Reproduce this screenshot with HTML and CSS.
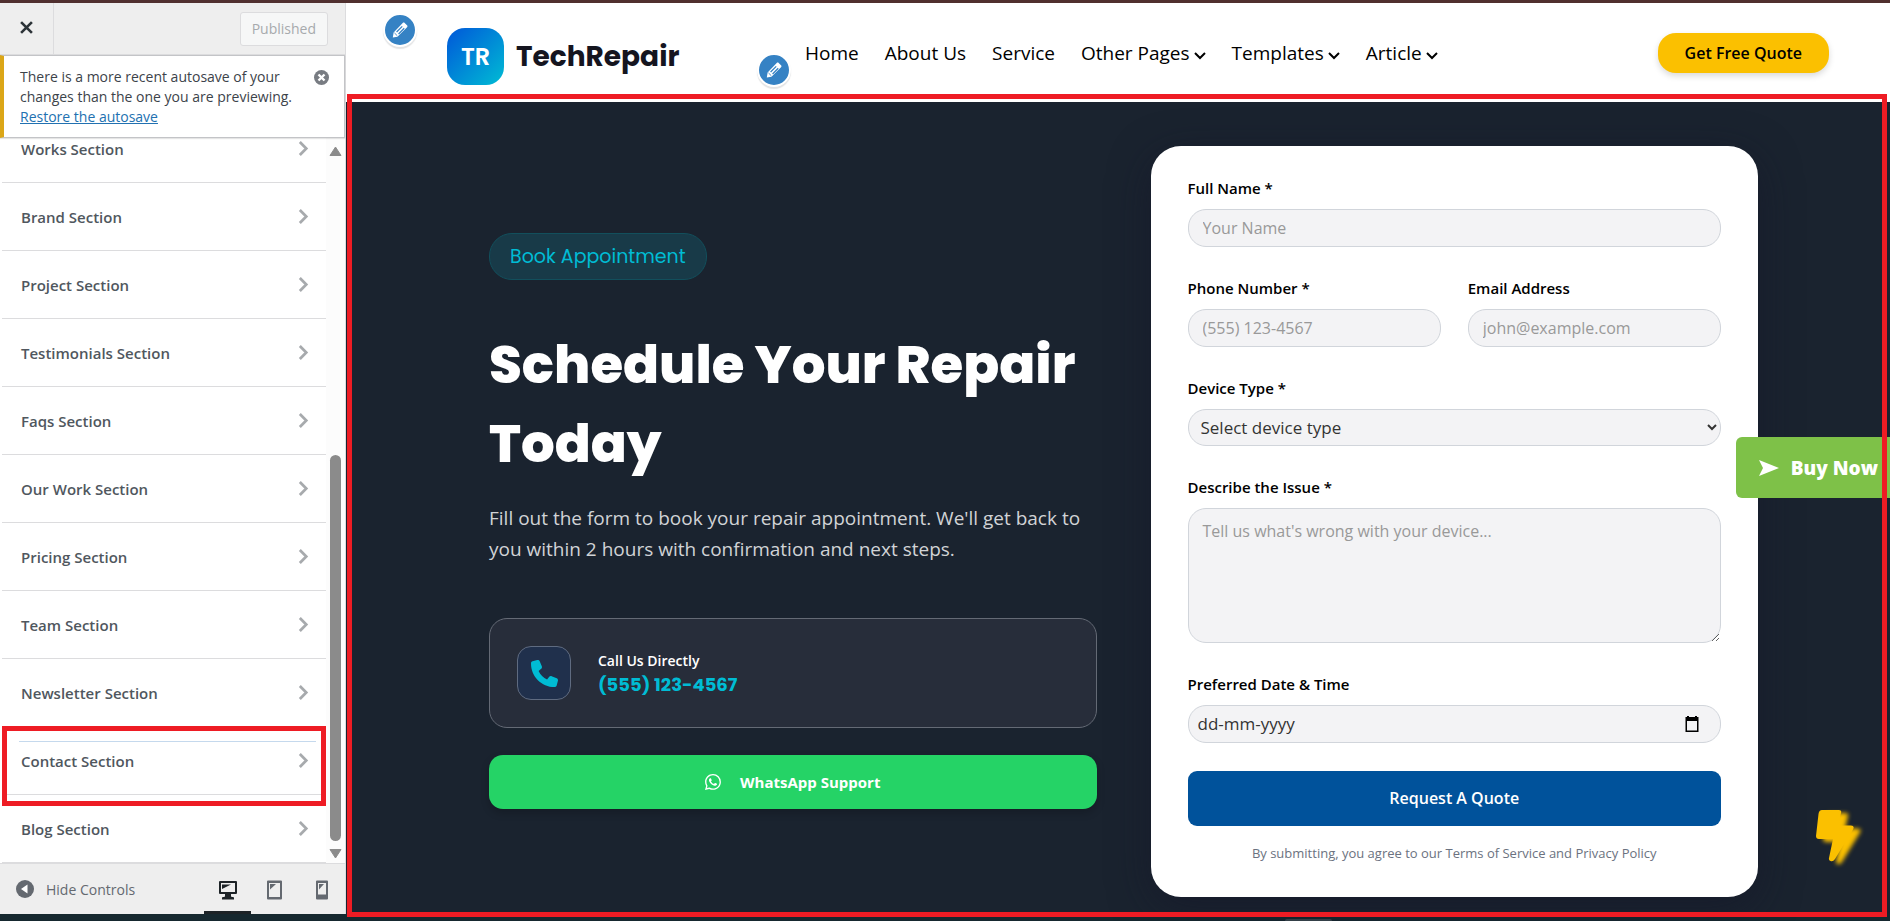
FILE: index.html
```html
<!DOCTYPE html>
<html lang="en">
<head>
    <meta charset="UTF-8">
    <meta name="viewport" content="width=device-width, initial-scale=1.0">
    <title>Customize: TechRepair</title>
    <link rel="stylesheet" href="styles.css">
</head>
<body>
    <!-- shared icons -->
    <svg class="sprite" aria-hidden="true">
        <symbol id="chevron-right" viewBox="0 0 12 18"><path d="M2 2l7 7-7 7" fill="none" stroke="currentColor" stroke-width="3"/></symbol>
        <symbol id="chevron-down" viewBox="0 0 12 8"><path d="M1 1l5 5 5-5" fill="none" stroke="currentColor" stroke-width="2"/></symbol>
        <symbol id="pencil" viewBox="0 0 20 20">
            <path d="M13 2.2c.7-.7 1.5-.7 2.2 0l2.6 2.6c.7.7.7 1.5 0 2.2L7.2 17.4 2 18.3l.9-5.4z" fill="#fff"/>
            <path d="M6.2 12.3l6.3-6.3M8.4 14.4l6.3-6.3" stroke="#3582c4" stroke-width="1.4"/>
            <path d="M3.8 13.2l3.2 3.2" stroke="#3582c4" stroke-width="1"/>
        </symbol>
    </svg>

    <div class="customizer">
        <aside class="sidebar">
            <header class="sidebar-header">
                <button class="close-btn" aria-label="Close">
                    <svg width="13" height="13" viewBox="0 0 12 12"><path d="M1 1l10 10M11 1L1 11" stroke="currentColor" stroke-width="2.4"/></svg>
                </button>
                <button class="publish-btn" disabled>Published</button>
            </header>

            <div class="notice">
                <p>There is a more recent autosave of your changes than the one you are previewing. <a href="#">Restore the autosave</a></p>
                <button class="dismiss-btn" aria-label="Dismiss">
                    <svg width="15" height="15" viewBox="0 0 15 15"><circle cx="7.5" cy="7.5" r="7.5" fill="#787c82"/><path d="M4.5 4.5l6 6M10.5 4.5l-6 6" stroke="#fff" stroke-width="2.4"/></svg>
                </button>
            </div>

            <div class="panel">
                <ul class="section-list">
                    <li><a href="#">Works Section <svg><use href="#chevron-right"/></svg></a></li>
                    <li><a href="#">Brand Section <svg><use href="#chevron-right"/></svg></a></li>
                    <li><a href="#">Project Section <svg><use href="#chevron-right"/></svg></a></li>
                    <li><a href="#">Testimonials Section <svg><use href="#chevron-right"/></svg></a></li>
                    <li><a href="#">Faqs Section <svg><use href="#chevron-right"/></svg></a></li>
                    <li><a href="#">Our Work Section <svg><use href="#chevron-right"/></svg></a></li>
                    <li><a href="#">Pricing Section <svg><use href="#chevron-right"/></svg></a></li>
                    <li><a href="#">Team Section <svg><use href="#chevron-right"/></svg></a></li>
                    <li><a href="#">Newsletter Section <svg><use href="#chevron-right"/></svg></a></li>
                    <li class="highlighted"><a href="#">Contact Section <svg><use href="#chevron-right"/></svg></a></li>
                    <li><a href="#">Blog Section <svg><use href="#chevron-right"/></svg></a></li>
                </ul>
                <div class="scrollbar">
                    <svg width="13" height="10" viewBox="0 0 13 10"><path d="M6.5 1l5.5 8.5H1z" fill="#8b8b8b" stroke="#8b8b8b" stroke-linejoin="round"/></svg>
                    <div class="track"><div class="thumb"></div></div>
                    <svg width="13" height="10" viewBox="0 0 13 10"><path d="M6.5 9L1 .5h11z" fill="#8b8b8b" stroke="#8b8b8b" stroke-linejoin="round"/></svg>
                </div>
            </div>

            <footer class="sidebar-footer">
                <button class="hide-btn">
                    <svg width="18" height="18" viewBox="0 0 18 18"><circle cx="9" cy="9" r="9" fill="#646970"/><path d="M5 9l6.5-4.5v9z" fill="#fff"/></svg>
                    Hide Controls
                </button>
                <div class="devices">
                    <button class="active" aria-label="Desktop">
                        <svg width="20" height="20" viewBox="0 0 20 20"><path d="M2 1h16q1 0 1 1v11q0 1-1 1h-5v2q0 1 1 1h1q1 0 1 1v1.5H4V18q0-1 1-1h1q1 0 1-1v-2H2q-1 0-1-1V2q0-1 1-1zM3 3v9h14V3z" fill="currentColor" fill-rule="evenodd"/><path d="M4 4.5h9L4 9z" fill="currentColor"/></svg>
                    </button>
                    <button aria-label="Tablet">
                        <svg width="20" height="20" viewBox="0 0 20 20"><path d="M3 .5h13q1 0 1 1v17q0 1-1 1H3q-1 0-1-1v-17q0-1 1-1zM4 3v14h11V3z" fill="currentColor" fill-rule="evenodd"/><path d="M5 4h6L5 9.5z" fill="currentColor"/></svg>
                    </button>
                    <button aria-label="Mobile">
                        <svg width="20" height="20" viewBox="0 0 20 20"><path d="M5 .5h10q1 0 1 1v17q0 1-1 1H5q-1 0-1-1v-17q0-1 1-1zM6 3v11.5h8V3z" fill="currentColor" fill-rule="evenodd"/><path d="M7 4h5l-5 5.5z" fill="currentColor"/></svg>
                    </button>
                </div>
            </footer>
        </aside>

        <main class="preview">
            <header class="site-header">
                <button class="edit-btn edit-logo" aria-label="Edit logo"><svg><use href="#pencil"/></svg></button>
                <a class="logo" href="#"><span class="logo-mark">TR</span>TechRepair</a>
                <button class="edit-btn edit-menu" aria-label="Edit menu"><svg><use href="#pencil"/></svg></button>
                <nav class="main-nav">
                    <a href="#">Home</a>
                    <a href="#">About Us</a>
                    <a href="#">Service</a>
                    <a href="#">Other Pages<svg><use href="#chevron-down"/></svg></a>
                    <a href="#">Templates<svg><use href="#chevron-down"/></svg></a>
                    <a href="#">Article<svg><use href="#chevron-down"/></svg></a>
                </nav>
                <a class="quote-link" href="#">Get Free Quote</a>
            </header>

            <section class="contact">
                <div class="contact-info">
                    <span class="badge">Book Appointment</span>
                    <h1>Schedule Your Repair Today</h1>
                    <p>Fill out the form to book your repair appointment. We'll get back to you within 2 hours with confirmation and next steps.</p>
                    <div class="call-card">
                        <span class="call-icon">
                            <svg width="27" height="27" viewBox="0 0 512 512"><path fill="currentColor" d="M164.9 24.6c-7.7-18.6-28-28.5-47.4-23.2l-88 24C12.1 30.2 0 46 0 64C0 311.4 200.6 512 448 512c18 0 33.8-12.1 38.6-29.5l24-88c5.3-19.4-4.6-39.7-23.2-47.4l-96-40c-16.3-6.8-35.2-2.1-46.3 11.6L304.7 368C234.3 334.7 177.3 277.7 144 207.3L193.3 167c13.7-11.2 18.4-30 11.6-46.3l-40-96z"/></svg>
                        </span>
                        <div>
                            <strong>Call Us Directly</strong>
                            <a href="tel:5551234567">(555) 123-4567</a>
                        </div>
                    </div>
                    <a class="whatsapp-link" href="#">
                        <svg width="16" height="16" viewBox="0 0 16 16"><path fill="currentColor" d="M13.601 2.326A7.85 7.85 0 0 0 7.994 0C3.627 0 .068 3.558.064 7.926c0 1.399.366 2.76 1.057 3.965L0 16l4.204-1.102a7.9 7.9 0 0 0 3.79.965h.004c4.368 0 7.926-3.558 7.93-7.93A7.9 7.9 0 0 0 13.6 2.326zM7.994 14.521a6.6 6.6 0 0 1-3.356-.92l-.24-.144-2.494.654.666-2.433-.156-.251a6.56 6.56 0 0 1-1.007-3.505c0-3.626 2.957-6.584 6.591-6.584a6.56 6.56 0 0 1 4.66 1.931 6.56 6.56 0 0 1 1.928 4.66c-.004 3.639-2.961 6.592-6.592 6.592m3.615-4.934c-.197-.099-1.17-.578-1.353-.646-.182-.065-.315-.099-.445.099-.133.197-.513.646-.627.775-.114.133-.232.148-.43.05-.197-.1-.836-.308-1.592-.985-.59-.525-.985-1.175-1.103-1.372-.114-.198-.011-.304.088-.403.087-.088.197-.232.296-.346.1-.114.133-.198.198-.33.065-.134.034-.248-.015-.347-.05-.099-.445-1.076-.612-1.47-.16-.389-.323-.335-.445-.34-.114-.007-.247-.007-.38-.007a.73.73 0 0 0-.529.247c-.182.198-.691.677-.691 1.654s.71 1.916.81 2.049c.098.133 1.394 2.132 3.383 2.992.47.205.84.326 1.129.418.475.152.904.129 1.246.08.38-.058 1.171-.48 1.338-.943.164-.464.164-.86.114-.992-.049-.133-.182-.198-.38-.297"/></svg>
                        WhatsApp Support
                    </a>
                </div>

                <form class="booking-form">
                    <div class="field">
                        <label for="name">Full Name *</label>
                        <input type="text" id="name" placeholder="Your Name">
                    </div>
                    <div class="field-row">
                        <div class="field">
                            <label for="phone">Phone Number *</label>
                            <input type="tel" id="phone" placeholder="(555) 123-4567">
                        </div>
                        <div class="field">
                            <label for="email">Email Address</label>
                            <input type="email" id="email" placeholder="john@example.com">
                        </div>
                    </div>
                    <div class="field">
                        <label for="device">Device Type *</label>
                        <select id="device">
                            <option>Select device type</option>
                            <option>Phone</option>
                            <option>Laptop</option>
                            <option>Tablet</option>
                        </select>
                    </div>
                    <div class="field">
                        <label for="issue">Describe the Issue *</label>
                        <textarea id="issue" placeholder="Tell us what's wrong with your device..."></textarea>
                    </div>
                    <div class="field">
                        <label for="date">Preferred Date &amp; Time</label>
                        <div class="date-box">
                            <input type="text" id="date" placeholder="dd-mm-yyyy" onfocus="this.type='date'">
                            <svg width="16" height="16" viewBox="0 0 16 16"><path d="M3 0h2v1h6V0h2v1h1.5v15h-13V1H3zM3 5v9.5h10V5z" fill="#000" fill-rule="evenodd"/></svg>
                        </div>
                    </div>
                    <button type="submit" class="submit-btn">Request A Quote</button>
                    <p class="terms">By submitting, you agree to our Terms of Service and Privacy Policy</p>
                </form>
            </section>

            <a class="buy-now" href="#">
                <svg width="20" height="16" viewBox="0 0 20 16"><path d="M0 0l20 8-20 8 4-8z" fill="#fff"/></svg>
                Buy Now
            </a>
            <button class="flash-btn" aria-label="Back to top">
                <svg width="38" height="52" viewBox="0 0 38 52"><path d="M6 0h17q3 0 2 3l-3 12.5h13q4 0 2 4L19 49q-2 3-4.5 2-2-.5-1.5-3l4-19H3q-3 0-3-3L2.5 4Q3 0 6 0z" fill="#fbc000"/></svg>
            </button>
            <div class="preview-outline"></div>
        </main>
    </div>
    <div class="taskbar"><span></span></div>
</body>
</html>
```
FILE: styles.css
```css
* {
    box-sizing: border-box;
}
body {
    margin: 0;
    min-height: 100vh;
    display: flex;
    flex-direction: column;
    border-top: 3px solid #50302f;
    font-family: "Segoe UI", "Open Sans", "Noto Sans", sans-serif;
    color: #000;
    overflow-x: hidden;
}
button, input, select, textarea {
    font-family: inherit;
}
button {
    cursor: pointer;
    border: none;
    background: none;
    padding: 0;
}
a {
    color: inherit;
    text-decoration: none;
}
.sprite {
    position: absolute;
    width: 0;
    height: 0;
}
.customizer {
    flex: 1;
    display: grid;
    grid-template-columns: 346px 1fr;
}

/* sidebar */
.sidebar {
    display: flex;
    flex-direction: column;
    background: #fff;
    border-right: 1px solid #dcdcde;
}
.sidebar-header {
    height: 52px;
    display: flex;
    align-items: center;
    justify-content: space-between;
    background: #eee;
    border-bottom: 1px solid #dcdcde;
    padding-right: 17px;
}
.close-btn {
    width: 54px;
    height: 100%;
    border-right: 1px solid #dcdcde;
    color: #2c3338;
}
.publish-btn {
    height: 34px;
    padding: 0 11px;
    font-size: 14px;
    color: #a7aaad;
    background: #f6f7f7;
    border: 1px solid #dcdcde;
    border-radius: 3px;
}
.notice {
    position: relative;
    z-index: 1;
    display: flex;
    justify-content: space-between;
    align-items: flex-start;
    padding: 11px 15px 10px 16px;
    background: #fff;
    border: 1px solid #c3c4c7;
    border-left: 4px solid #dba617;
    box-shadow: 0 1px 1px rgba(0, 0, 0, 0.1);
}
.notice p {
    margin: 0;
    width: 280px;
    font-size: 14px;
    line-height: 20px;
    color: #3c434a;
}
.notice a {
    color: #2271b1;
    text-decoration: underline;
}
.dismiss-btn {
    display: flex;
    padding-top: 3px;
}
.panel {
    flex: 1 1 0px;
    min-height: 0;
    display: flex;
    overflow: hidden;
}
.section-list {
    flex: 1;
    display: flex;
    flex-direction: column;
    justify-content: flex-end;
    list-style: none;
    margin: 0;
    padding: 0 0 0 2px;
    overflow: hidden;
}
.section-list li {
    flex: none;
    position: relative;
}
.section-list a {
    display: flex;
    align-items: center;
    justify-content: space-between;
    height: 68px;
    padding: 0 17px 0 19px;
    border-bottom: 1px solid #dcdcde;
    font-size: 15px;
    font-weight: 600;
    color: #50575e;
}
.section-list svg {
    width: 11px;
    height: 17px;
    color: #a7aaad;
}
.section-list .highlighted {
    z-index: 1;
}
.section-list .highlighted::before {
    content: "";
    position: absolute;
    inset: -1px 0 -11px;
    border: 5px solid #ee1c24;
    pointer-events: none;
}
.section-list .highlighted::after {
    content: "";
    position: absolute;
    top: 14px;
    left: 17px;
    right: 10px;
    border-top: 1px solid #c5d9ed;
}
.scrollbar {
    width: 19px;
    display: flex;
    flex-direction: column;
    align-items: center;
    justify-content: space-between;
    padding: 8px 0 4px;
    background: #fcfcfc;
}
.track {
    flex: 1;
    display: flex;
    align-items: flex-end;
    padding: 8px 0;
}
.thumb {
    width: 11px;
    height: 57%;
    border-radius: 6px;
    background: #8b8b8b;
}
.sidebar-footer {
    display: flex;
    align-items: stretch;
    justify-content: space-between;
    height: 51px;
    background: #eee;
    border-top: 1px solid #dcdcde;
}
.hide-btn {
    display: flex;
    align-items: center;
    gap: 12px;
    padding-left: 16px;
    font-size: 14px;
    color: #646970;
}
.devices {
    display: flex;
}
.devices button {
    width: 47px;
    padding-top: 8px;
    color: #646970;
    border-bottom: 3px solid transparent;
}
.devices .active {
    color: #1d2327;
    border-color: #1d2327;
}

/* preview */
.preview {
    position: relative;
    display: flex;
    flex-direction: column;
    background: #1a232f;
}
.preview-outline {
    position: absolute;
    inset: 91px 3px -3px 1px;
    border: 5px solid #ee1c24;
    pointer-events: none;
    z-index: 3;
}
.site-header {
    position: relative;
    display: flex;
    align-items: center;
    height: 99px;
    padding: 0 61px 0 101px;
    background: #fff;
}
.edit-btn {
    position: absolute;
    display: flex;
    align-items: center;
    justify-content: center;
    width: 34px;
    height: 34px;
    border: 2px solid #fff;
    border-radius: 50%;
    background: #3582c4;
    box-shadow: 0 2px 1px rgba(60, 67, 74, 0.15);
}
.edit-btn svg {
    width: 18px;
    height: 18px;
}
.edit-logo {
    left: 37px;
    top: 10px;
}
.edit-menu {
    left: 411px;
    top: 50px;
}
.logo {
    display: flex;
    align-items: center;
    gap: 12px;
    width: 358px;
    padding-top: 8px;
    font-family: "Poppins", "Inter", sans-serif;
    font-size: 28px;
    font-weight: 700;
    color: #15151f;
}
.logo-mark {
    display: flex;
    align-items: center;
    justify-content: center;
    width: 57px;
    height: 57px;
    border-radius: 18px;
    background: linear-gradient(135deg, #0057d9, #00bcd4);
    font-size: 24px;
    font-weight: 600;
    color: #fff;
}
.main-nav {
    flex: 1;
    display: flex;
    align-items: center;
    gap: 26px;
    font-size: 19px;
}
.main-nav svg {
    width: 12px;
    height: 8px;
    margin-left: 4px;
}
.quote-link {
    padding: 8px 27px;
    border-radius: 18px;
    background: #fbc000;
    box-shadow: 0 3px 6px rgba(0, 0, 0, 0.15);
    font-size: 16px;
    font-weight: 600;
    line-height: 24px;
}
.contact {
    flex: 1;
    display: grid;
    grid-template-columns: 1fr 1fr;
    gap: 54px;
    align-items: center;
    padding: 43px 132px 17px 143px;
}
.contact-info {
    display: flex;
    flex-direction: column;
    align-items: flex-start;
}
.badge {
    padding: 0 20px;
    border: 1px solid #124f5c;
    border-radius: 23px;
    background: #183a48;
    font-family: "Poppins", "Inter", sans-serif;
    font-size: 19px;
    line-height: 45px;
    color: #00bcd4;
}
.contact-info h1 {
    margin: 45px 0 0;
    font-family: "Poppins", "Inter", sans-serif;
    font-size: 53px;
    font-weight: 800;
    line-height: 79px;
    color: #fff;
}
.contact-info p {
    margin: 20px 0 53px;
    font-size: 19px;
    font-weight: 500;
    line-height: 31px;
    color: #d1d3d6;
}
.call-card {
    display: flex;
    align-items: center;
    gap: 27px;
    width: 100%;
    min-height: 110px;
    padding: 0 27px;
    border: 1px solid #646a75;
    border-radius: 18px;
    background: #272d3a;
    color: #fff;
}
.call-icon {
    display: flex;
    align-items: center;
    justify-content: center;
    width: 54px;
    height: 54px;
    border: 1px solid #5f6b80;
    border-radius: 14px;
    background: #20304c;
    color: #00bcd4;
}
.call-card strong {
    display: block;
    font-size: 14px;
    font-weight: 600;
    line-height: 24px;
}
.call-card a {
    display: block;
    font-family: "Poppins", "Inter", sans-serif;
    font-size: 18px;
    font-weight: 700;
    line-height: 24px;
    color: #00bcd4;
}
.whatsapp-link {
    display: flex;
    align-items: center;
    justify-content: center;
    gap: 19px;
    width: 100%;
    height: 54px;
    margin-top: 27px;
    border-radius: 14px;
    background: #25d366;
    box-shadow: 0 4px 8px rgba(0, 0, 0, 0.2);
    font-size: 15px;
    font-weight: 700;
    color: #fff;
}

/* booking form */
.booking-form {
    display: flex;
    flex-direction: column;
    gap: 28px;
    padding: 29px 37px 34px;
    border-radius: 30px;
    background: #fff;
    box-shadow: 0 10px 40px rgba(20, 20, 40, 0.5);
}
.field-row {
    display: grid;
    grid-template-columns: 1fr 1fr;
    gap: 27px;
}
.field {
    display: flex;
    flex-direction: column;
    gap: 8px;
}
.field label {
    font-size: 15px;
    font-weight: 600;
    line-height: 26px;
}
.field input, .field select, .field textarea {
    width: 100%;
    height: 38px;
    padding: 0 14px;
    border: 1px solid #d1d5db;
    border-radius: 18px;
    background: #f3f3f5;
    font-size: 16px;
    color: #333;
}
.field select {
    height: 37px;
    padding: 0 8px;
    font-size: 17px;
}
.field textarea {
    display: block;
    height: 135px;
    padding: 11px 14px;
}
.field ::placeholder {
    color: #999;
}
.date-box {
    display: grid;
    align-items: center;
}
.date-box input, .date-box svg {
    grid-area: 1 / 1;
}
.field .date-box input {
    padding: 0 9px;
    font-size: 17px;
}
.date-box svg {
    justify-self: end;
    margin-right: 21px;
    pointer-events: none;
}
.date-box ::placeholder {
    color: #333;
}
.submit-btn {
    height: 55px;
    border-radius: 9px;
    background: #00529b;
    font-size: 16px;
    font-weight: 600;
    color: #fff;
}
.terms {
    margin: -11px 0 0;
    font-size: 13px;
    line-height: 20px;
    text-align: center;
    color: #6b7280;
}

/* floating items */
.buy-now {
    position: absolute;
    right: 0;
    top: 434px;
    display: flex;
    align-items: center;
    gap: 12px;
    height: 61px;
    padding: 0 12px 0 23px;
    border-radius: 6px 0 0 6px;
    background: #7ec148;
    font-size: 19px;
    font-weight: 800;
    color: #fff;
}
.flash-btn {
    position: absolute;
    right: 36px;
    bottom: 52px;
    display: flex;
    filter: drop-shadow(7px 3px 2px #fbc000);
}
.taskbar {
    display: flex;
    justify-content: center;
    align-items: flex-end;
    height: 7px;
    padding-left: 727px;
    background: #16282f;
}
.taskbar span {
    width: 47px;
    height: 2px;
    border-radius: 3px 3px 0 0;
    background: #3a474d;
}
```
